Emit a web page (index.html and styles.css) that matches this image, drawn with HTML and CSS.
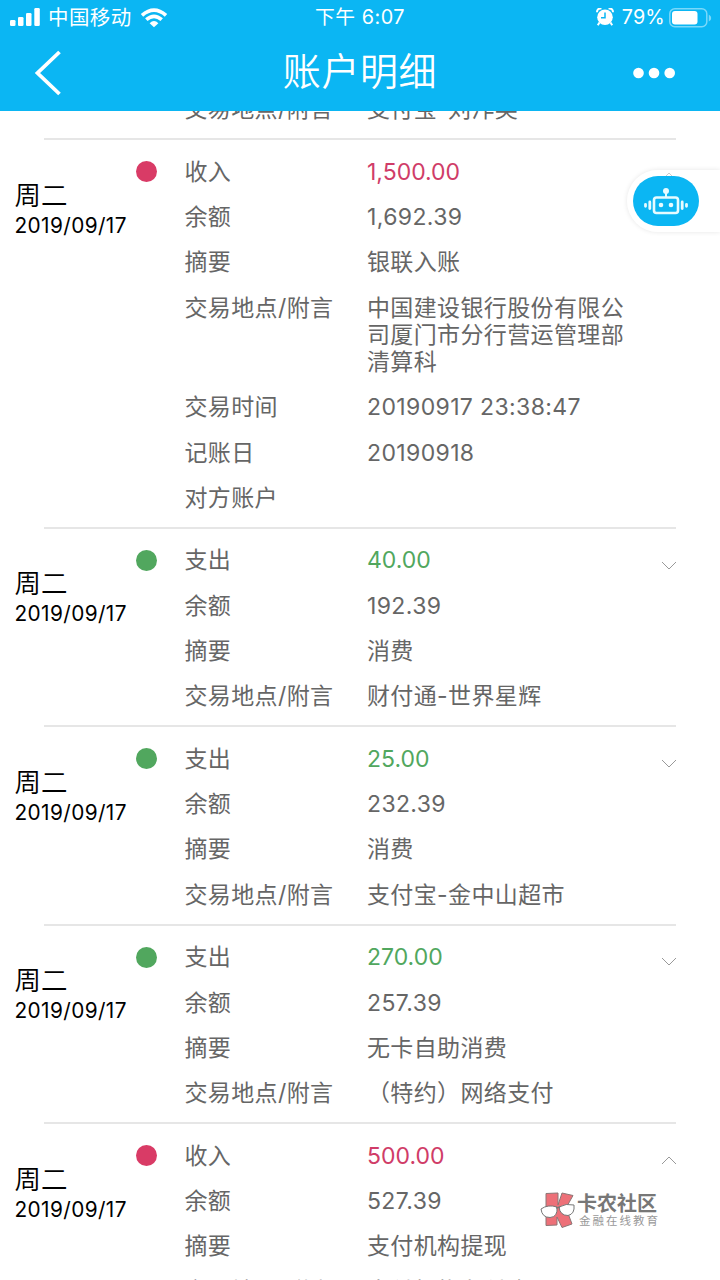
FILE: index.html
```html
<!DOCTYPE html>
<html lang="zh-CN">
<head>
    <meta charset="UTF-8">
    <meta name="viewport" content="width=device-width, initial-scale=1.0">
    <title>账户明细</title>
    <link rel="stylesheet" href="styles.css">
</head>
<body>
    <header class="header">
        <div class="status">
            <div class="status-left">
                <svg class="signal" width="31" height="20" viewBox="0 0 31 20" fill="#fff">
                    <rect x="0" y="12" width="5.5" height="6" rx="1.3"/>
                    <rect x="8" y="9" width="5.5" height="9" rx="1.3"/>
                    <rect x="16" y="5" width="5.5" height="13" rx="1.3"/>
                    <rect x="24.3" y="0" width="5.5" height="18" rx="1.3"/>
                </svg>
                <span class="carrier">中国移动</span>
                <svg class="wifi" width="28" height="20" viewBox="0 0 28 20" fill="none" stroke="#fff" stroke-width="3.7">
                    <path d="M2 7.3Q14 -3 26 7.3"/>
                    <path d="M6.3 11.7Q14 5 21.7 11.7"/>
                    <path d="M9.6 15.2Q14 11 18.4 15.2L14 19.3Z" fill="#fff" stroke="none"/>
                </svg>
            </div>
            <div class="status-time">下午 6:07</div>
            <div class="status-right">
                <svg width="18" height="20" viewBox="0 0 18 20">
                    <path d="M1 4.2Q1 0 5.5 .5M17 4.2Q17 0 12.5 .5" fill="none" stroke="#fff" stroke-width="2"/>
                    <path d="M3.5 14.5L1.8 17.3M14.5 14.500L16.2 17.3" stroke="#fff" stroke-width="2"/>
                    <circle cx="9" cy="9.2" r="7.8" fill="#fff"/>
                    <path d="M9 4.5V9.7H5" fill="none" stroke="#0bb6f3" stroke-width="1.5"/>
                </svg>
                <span class="percent">79%</span>
                <svg width="43" height="20" viewBox="0 0 43 20">
                    <rect x=".8" y=".8" width="37" height="18" rx="5" fill="none" stroke="#7ad8fa" stroke-width="1.5"/>
                    <rect x="3" y="3" width="25.5" height="13.4" rx="3" fill="#fff"/>
                    <path d="M39.8 6.5Q42.4 8 42.2 10Q42.4 12 39.8 13.5Z" fill="#7ad8fa"/>
                </svg>
            </div>
        </div>
        <div class="nav">
            <svg class="back" width="28" height="46" viewBox="0 0 28 46" fill="none" stroke="#fff" stroke-width="3.8">
                <path d="M25.5 2L3.5 23L25.5 44"/>
            </svg>
            <h1 class="title">账户明细</h1>
            <svg class="more" width="44" height="12" viewBox="0 0 44 12" fill="#fff">
                <circle cx="6.5" cy="6" r="5.3"/>
                <circle cx="22" cy="6" r="5.3"/>
                <circle cx="37.7" cy="6" r="5.3"/>
            </svg>
        </div>
    </header>

    <main class="list">
        <section class="record">
            <div class="date"></div>
            <dl class="rows">
                <dt>交易地点/附言</dt><dd>支付宝-刘泎英</dd>
            </dl>
        </section>

        <section class="record income">
            <div class="date"><b>周二</b><span>2019/09/17</span></div>
            <i class="dot"></i>
            <dl class="rows">
                <dt>收入</dt><dd class="amount">1,500.00</dd>
                <dt>余额</dt><dd>1,692.39</dd>
                <dt>摘要</dt><dd>银联入账</dd>
                <dt>交易地点/附言</dt><dd>中国建设银行股份有限公司厦门市分行营运管理部清算科</dd>
                <dt>交易时间</dt><dd>20190917 23:38:47</dd>
                <dt>记账日</dt><dd>20190918</dd>
                <dt>对方账户</dt><dd></dd>
            </dl>
            <svg class="arrow" width="16" height="9" viewBox="0 0 16 9"><path d="M1 8L8 1L15 8"/></svg>
        </section>

        <section class="record expense">
            <div class="date"><b>周二</b><span>2019/09/17</span></div>
            <i class="dot"></i>
            <dl class="rows">
                <dt>支出</dt><dd class="amount">40.00</dd>
                <dt>余额</dt><dd>192.39</dd>
                <dt>摘要</dt><dd>消费</dd>
                <dt>交易地点/附言</dt><dd>财付通-世界星辉</dd>
            </dl>
            <svg class="arrow" width="16" height="9" viewBox="0 0 16 9"><path d="M1 1L8 8L15 1"/></svg>
        </section>

        <section class="record expense">
            <div class="date"><b>周二</b><span>2019/09/17</span></div>
            <i class="dot"></i>
            <dl class="rows">
                <dt>支出</dt><dd class="amount">25.00</dd>
                <dt>余额</dt><dd>232.39</dd>
                <dt>摘要</dt><dd>消费</dd>
                <dt>交易地点/附言</dt><dd>支付宝-金中山超市</dd>
            </dl>
            <svg class="arrow" width="16" height="9" viewBox="0 0 16 9"><path d="M1 1L8 8L15 1"/></svg>
        </section>

        <section class="record expense">
            <div class="date"><b>周二</b><span>2019/09/17</span></div>
            <i class="dot"></i>
            <dl class="rows">
                <dt>支出</dt><dd class="amount">270.00</dd>
                <dt>余额</dt><dd>257.39</dd>
                <dt>摘要</dt><dd>无卡自助消费</dd>
                <dt>交易地点/附言</dt><dd>（特约）网络支付</dd>
            </dl>
            <svg class="arrow" width="16" height="9" viewBox="0 0 16 9"><path d="M1 1L8 8L15 1"/></svg>
        </section>

        <section class="record income">
            <div class="date"><b>周二</b><span>2019/09/17</span></div>
            <i class="dot"></i>
            <dl class="rows">
                <dt>收入</dt><dd class="amount">500.00</dd>
                <dt>余额</dt><dd>527.39</dd>
                <dt>摘要</dt><dd>支付机构提现</dd>
                <dt>交易地点/附言</dt><dd>支付机构备付金账</dd>
            </dl>
            <svg class="arrow" width="16" height="9" viewBox="0 0 16 9"><path d="M1 8L8 1L15 8"/></svg>
        </section>
    </main>

    <div class="robot">
        <div class="robot-btn">
            <svg width="46" height="28" viewBox="0 0 46 28" fill="none" stroke="#e6fbff" stroke-linecap="round">
                <rect x="11" y="10.5" width="24" height="15.5" rx="2.5" stroke-width="2.6"/>
                <path d="M23 10V4" stroke-width="2"/>
                <circle cx="23" cy="4" r="3" fill="#e6fbff" stroke="none"/>
                <circle cx="18" cy="18" r="2.3" fill="#e6fbff" stroke="none"/>
                <circle cx="28" cy="18" r="2.3" fill="#e6fbff" stroke="none"/>
                <path d="M6.8 15V21.5M39.2 15V21.5" stroke-width="2.8"/>
                <path d="M2.5 17.3V19.3M43.5 17.3V19.3" stroke-width="2.8"/>
            </svg>
        </div>
    </div>

    <div class="brand">
        <svg width="36" height="38" viewBox="0 0 36 38">
            <path d="M6 2.5L18 2V14L22 2L33 4.500L26 17L32 33L22 36.5L17 26V34L6 34.5Z" fill="#ed7078" stroke="#8c7676" stroke-width="1"/>
            <path d="M1 18Q8 13 17 16Q18 26 10 26.5Q2 26.5 1 18ZM19 16Q26 12 34 14Q35 23 28 24.5Q20 24.5 19 16Z" fill="#fff" stroke="#777" stroke-width="1"/>
            <path d="M16 17L20 16" stroke="#777" stroke-width="1.5"/>
        </svg>
        <div class="brand-text"><strong>卡农社区</strong><span>金融在线教育</span></div>
    </div>
</body>
</html>
```
FILE: styles.css
```css
* {
    box-sizing: border-box;
}

body {
    position: relative;
    margin: 0;
    width: 720px;
    height: 1280px;
    overflow: hidden;
    background: #fff;
    color: #666;
    font-family: Inter, "Noto Sans CJK SC", sans-serif;
}

.header {
    position: relative;
    z-index: 1;
    height: 111px;
    background: #0bb6f3;
    color: #fff;
}

.status {
    display: grid;
    grid-template-columns: 1fr auto 1fr;
    align-items: center;
    height: 34px;
    padding: 1px 10px 0;
    font-size: 19.8px;
    line-height: 33px;
}

.status-left,
.status-right {
    display: flex;
    align-items: center;
}

.status-right {
    justify-content: flex-end;
}

.carrier {
    margin: 0 8px 0 7px;
    font-size: 20.5px;
    letter-spacing: .4px;
}

.status-time {
    letter-spacing: .5px;
}

.percent {
    margin: 0 4px 0 8px;
    letter-spacing: .2px;
}

.status-right svg:last-child {
    margin-right: -2px;
}

.nav {
    display: grid;
    grid-template-columns: 1fr auto 1fr;
    align-items: center;
    height: 77px;
    padding: 0 44px 0 34px;
}

.more {
    justify-self: end;
}

/* side paddings differ, so the caption is nudged back to the screen centre */
.title {
    margin: 0 -5px 0 5px;
    font-size: 38px;
    font-weight: 350;
    line-height: 74px;
    letter-spacing: .6px;
    transform: translateY(-2px);
}

.list {
    margin-top: -34px;
}

.record {
    position: relative;
    display: flex;
    padding: 10.4px 0 6.8px 14.5px;
}

.record::after {
    content: "";
    position: absolute;
    left: 44px;
    right: 44px;
    bottom: -1px;
    height: 2px;
    background: #e6e6e6;
}

.date {
    width: 170px;
    padding-top: 28px;
    color: #000;
}

.date b {
    display: block;
    font-size: 26.5px;
    font-weight: 350;
    line-height: 34px;
}

.date span {
    display: block;
    font-size: 20.8px;
    font-weight: 390;
    line-height: 28px;
    letter-spacing: .4px;
}

.dot {
    position: absolute;
    left: 135.5px;
    top: 22px;
    width: 21px;
    height: 21px;
    border-radius: 50%;
}

.income .dot {
    background: #d93b66;
}

.expense .dot {
    background: #51a75e;
}

.income .amount {
    color: #d03c68;
}

.expense .amount {
    color: #51a75e;
}

.rows {
    display: grid;
    grid-template-columns: 182.5px 262px;
    margin: 0;
    font-size: 23px;
    font-weight: 390;
    line-height: 27.2px;
    letter-spacing: .37px;
}

.rows dt,
.rows dd {
    min-height: 45.3px;
    margin: 0;
    padding: 9px 0;
}

.rows .amount {
    letter-spacing: 0;
}

.arrow {
    position: absolute;
    right: 43px;
    top: 32.5px;
    fill: none;
    stroke: #999;
    stroke-width: 1;
}

.robot {
    position: absolute;
    top: 170px;
    right: 0;
    width: 93px;
    height: 62px;
    padding: 6px;
    border-radius: 31px 0 0 31px;
    background: rgba(255, 255, 255, .5);
    box-shadow: 0 0 5px rgba(0, 0, 0, .1);
}

.robot-btn {
    display: flex;
    align-items: center;
    justify-content: center;
    width: 66px;
    height: 50px;
    border-radius: 25px;
    background: #0bb6f3;
}

.brand {
    position: absolute;
    left: 540px;
    top: 1191px;
    display: flex;
    gap: 1px;
    color: #777;
}

.brand-text {
    padding-top: 1px;
}

.brand-text strong,
.brand-text span {
    display: block;
    white-space: nowrap;
}

.brand-text strong {
    font-size: 20px;
    line-height: 24px;
}

.brand-text span {
    padding-left: 2px;
    font-size: 11.5px;
    line-height: 11px;
    letter-spacing: 2px;
    color: #999;
}
```
